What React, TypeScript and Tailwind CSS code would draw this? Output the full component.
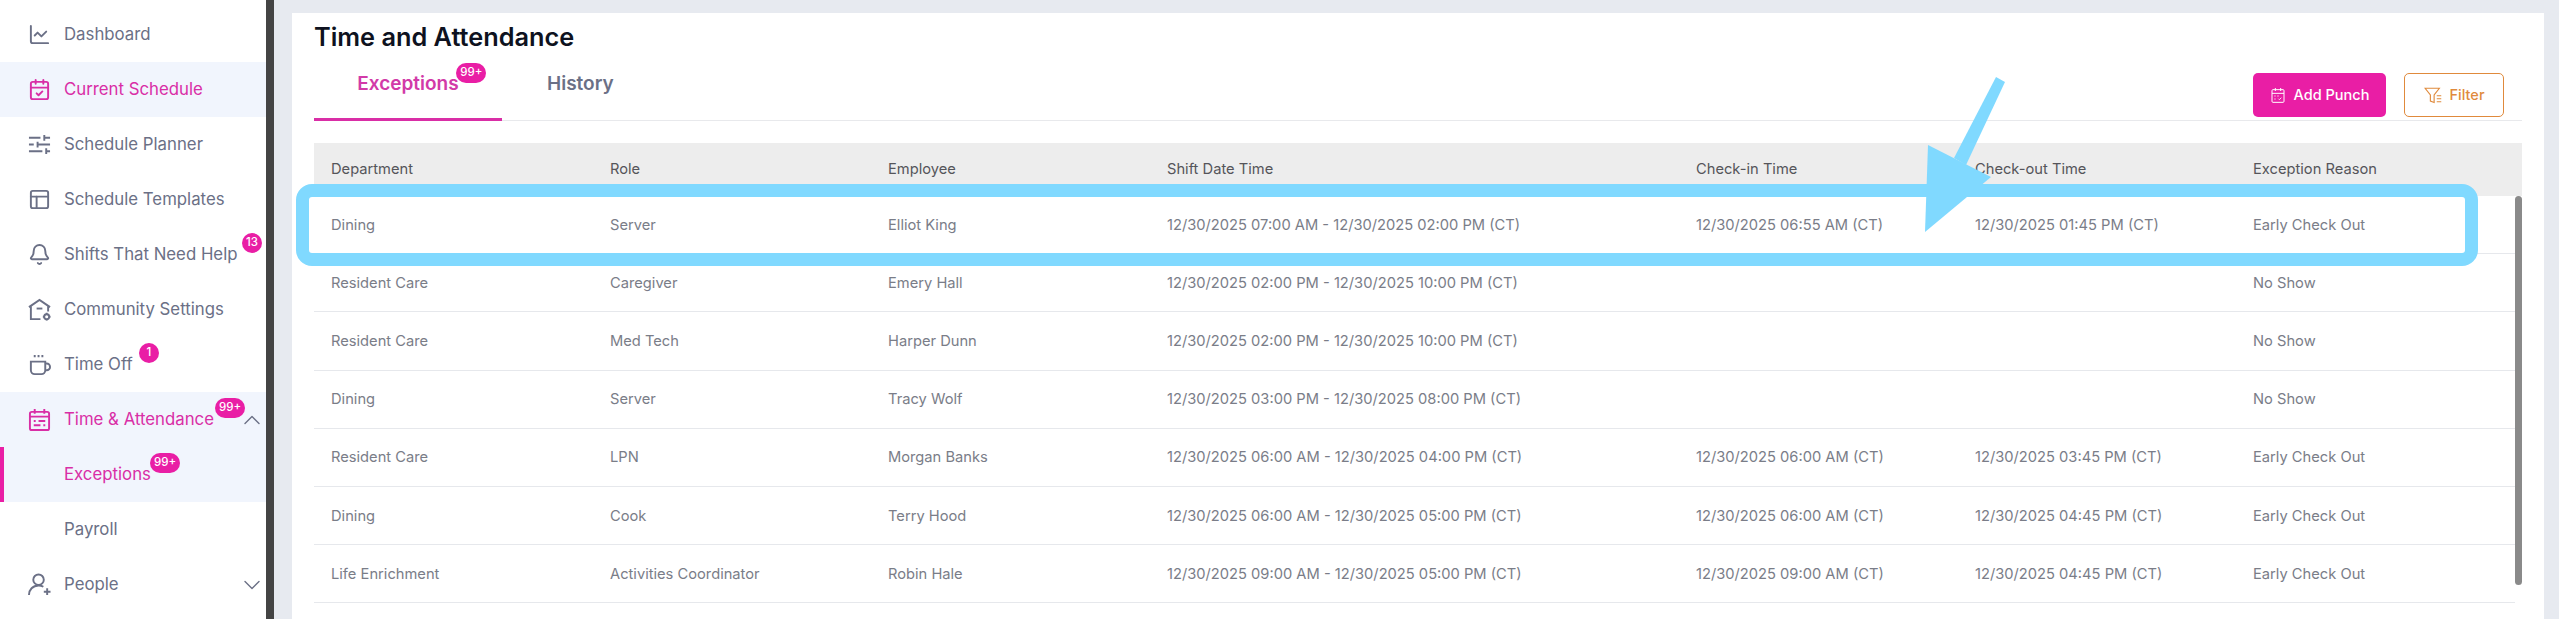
import type { ReactNode } from "react";
import { Bell, CalendarCheck, ChartLine, ChevronDown, ChevronUp, PanelsTopLeft } from "lucide-react";

const FONT = "font-['Inter','Noto_Sans',sans-serif]";

type Row = {
  department: string;
  role: string;
  employee: string;
  shift: string;
  checkIn: string;
  checkOut: string;
  reason: string;
};

const rows: Row[] = [
  { department: "Dining", role: "Server", employee: "Elliot King", shift: "12/30/2025 07:00 AM - 12/30/2025 02:00 PM (CT)", checkIn: "12/30/2025 06:55 AM (CT)", checkOut: "12/30/2025 01:45 PM (CT)", reason: "Early Check Out" },
  { department: "Resident Care", role: "Caregiver", employee: "Emery Hall", shift: "12/30/2025 02:00 PM - 12/30/2025 10:00 PM (CT)", checkIn: "", checkOut: "", reason: "No Show" },
  { department: "Resident Care", role: "Med Tech", employee: "Harper Dunn", shift: "12/30/2025 02:00 PM - 12/30/2025 10:00 PM (CT)", checkIn: "", checkOut: "", reason: "No Show" },
  { department: "Dining", role: "Server", employee: "Tracy Wolf", shift: "12/30/2025 03:00 PM - 12/30/2025 08:00 PM (CT)", checkIn: "", checkOut: "", reason: "No Show" },
  { department: "Resident Care", role: "LPN", employee: "Morgan Banks", shift: "12/30/2025 06:00 AM - 12/30/2025 04:00 PM (CT)", checkIn: "12/30/2025 06:00 AM (CT)", checkOut: "12/30/2025 03:45 PM (CT)", reason: "Early Check Out" },
  { department: "Dining", role: "Cook", employee: "Terry Hood", shift: "12/30/2025 06:00 AM - 12/30/2025 05:00 PM (CT)", checkIn: "12/30/2025 06:00 AM (CT)", checkOut: "12/30/2025 04:45 PM (CT)", reason: "Early Check Out" },
  { department: "Life Enrichment", role: "Activities Coordinator", employee: "Robin Hale", shift: "12/30/2025 09:00 AM - 12/30/2025 05:00 PM (CT)", checkIn: "12/30/2025 09:00 AM (CT)", checkOut: "12/30/2025 04:45 PM (CT)", reason: "Early Check Out" },
];

const COLUMNS = "grid grid-cols-[279px_278px_279px_529px_279px_278px_1fr]";

function Badge({ children, className }: { children: ReactNode; className: string }) {
  return (
    <span
      className={`absolute flex h-5 items-center justify-center rounded-full bg-[#e91ea5] text-[11.5px] font-medium text-white ${className}`}
    >
      {children}
    </span>
  );
}

function Icon({ children, className }: { children: ReactNode; className?: string }) {
  return (
    <svg viewBox="0 0 24 24" fill="none" stroke="currentColor" strokeWidth="2" className={className} aria-hidden>
      {children}
    </svg>
  );
}

function CalendarLines({ className }: { className?: string }) {
  return (
    <Icon className={className}>
      <rect x="2" y="4" width="20" height="19" rx="2" />
      <path d="M7 1v5M17 1v5M2 9h20M6 13.5h2M11 13.5h7M6 18h7M16 18h2" />
    </Icon>
  );
}

function PlannerIcon({ className }: { className?: string }) {
  return (
    <Icon className={className}>
      <path d="M1 5h12M17 2v6M17 5h6M1 12h5M10 9v6M10 12h13M1 19h14M19 16v6M19 19h4" />
    </Icon>
  );
}

function CommunityIcon({ className }: { className?: string }) {
  return (
    <Icon className={className}>
      <path d="M1 9.5 12 2l11 7.5" />
      <path d="M3 8.5V22h10M21 8.5V14" />
      <path d="M9 11h6" />
      <circle cx="19.5" cy="19.5" r="2.6" />
      <path d="M19.5 15.5v1.4M19.5 22.1v1.4M15.5 19.5h1.4M22.1 19.5h1.4" />
    </Icon>
  );
}

function CupIcon({ className }: { className?: string }) {
  return (
    <Icon className={className}>
      <path d="M3 9h15v9a4 4 0 0 1-4 4H7a4 4 0 0 1-4-4z" />
      <path d="M18 11h1.5a3.5 3.5 0 0 1 0 7H18" />
      <path d="M7 2v2.5M11 2v2.5M15 2v2.5" />
    </Icon>
  );
}

function PersonPlusIcon({ className }: { className?: string }) {
  return (
    <Icon className={className}>
      <circle cx="11" cy="7" r="5.5" />
      <path d="M1 23c0-5.5 4-10 10-10 2 0 3.5.4 5 1.3" />
      <path d="M20 16v7M16.5 19.5h7" />
    </Icon>
  );
}

function PunchIcon({ className }: { className?: string }) {
  return (
    <Icon className={className}>
      <rect x="3" y="4" width="18" height="19" rx="1.5" strokeWidth="1.5" />
      <path d="M8 1.5V6M16 1.5V6M3 9.5h18" strokeWidth="1.5" />
      <path d="M6.5 13.5h2M11 13.5h2M6.500 18h2M12.5 17.500l1.500 1.500 3-3" strokeWidth="1.3" />
    </Icon>
  );
}

function FilterIcon({ className }: { className?: string }) {
  return (
    <Icon className={className}>
      <path d="M1.5 3h19l-7 9v10l-5-2v-8z" strokeWidth="1.5" />
      <path d="M17 13h6M17 17h6M17 21h6" strokeWidth="1.5" />
    </Icon>
  );
}

function NavItem({
  icon,
  label,
  active,
  children,
  bar,
}: {
  icon?: ReactNode;
  label: string;
  active?: boolean;
  children?: ReactNode;
  bar?: boolean;
}) {
  return (
    <div
      className={`relative flex h-[55px] items-center pl-[28px] text-[16.8px] ${
        active ? "bg-[#f1f5fd] text-[#d92ea6]" : "text-[#6b7086]"
      }`}
    >
      {bar ? <span className="absolute inset-y-0 left-0 w-1 bg-[#e91ea5]" /> : null}
      <span className="flex w-[36px] shrink-0 items-center">{icon}</span>
      <span className="relative whitespace-nowrap">{label}</span>
      {children}
    </div>
  );
}

function Sidebar() {
  const icon = "size-[23px]";
  const chevron = "absolute right-0 top-[13.5px] size-[28px] stroke-[1.2] text-[#6b7086]";
  return (
    <aside className="w-[266px] shrink-0 bg-white pt-[7px]">
      <NavItem icon={<ChartLine className={icon} />} label="Dashboard" />
      <NavItem icon={<CalendarCheck className={icon} />} label="Current Schedule" active />
      <NavItem icon={<PlannerIcon className={icon} />} label="Schedule Planner" />
      <NavItem icon={<PanelsTopLeft className={icon} />} label="Schedule Templates" />
      <NavItem icon={<Bell className={icon} />} label="Shifts That Need Help">
        <Badge className="left-[242px] top-[6px] w-5">13</Badge>
      </NavItem>
      <NavItem icon={<CommunityIcon className={icon} />} label="Community Settings" />
      <NavItem icon={<CupIcon className={icon} />} label="Time Off">
        <Badge className="left-[139px] top-[6px] w-5">1</Badge>
      </NavItem>
      <NavItem icon={<CalendarLines className={icon} />} label="Time & Attendance" active>
        <Badge className="left-[215px] top-[6px] w-[30px]">99+</Badge>
        <ChevronUp className={chevron} />
      </NavItem>
      <NavItem label="Exceptions" active bar>
        <Badge className="left-[150px] top-[6px] w-[30px]">99+</Badge>
      </NavItem>
      <NavItem label="Payroll" />
      <NavItem icon={<PersonPlusIcon className={icon} />} label="People">
        <ChevronDown className={chevron} />
      </NavItem>
    </aside>
  );
}

function Arrow() {
  return (
    <svg viewBox="0 0 2559 619" className="pointer-events-none absolute inset-0 h-[619px] w-[2559px]" aria-hidden>
      <polygon points="1996,77 2005,82 1966,165 1954,158" fill="#80d9ff" />
      <polygon points="1928,145 1991,177 1925,232" fill="#80d9ff" />
    </svg>
  );
}

function Table() {
  return (
    <div className="relative mt-[22px] mr-[22px]">
      <div className={`${COLUMNS} h-[53px] items-center bg-[#ededed] pl-[17px] text-[14.7px] text-[#55555a]`}>
        <span>Department</span>
        <span>Role</span>
        <span>Employee</span>
        <span>Shift Date Time</span>
        <span>Check-in Time</span>
        <span>Check-out Time</span>
        <span>Exception Reason</span>
      </div>
      <div className="mr-[7px]">
        {rows.map((row) => (
          <div
            key={row.employee}
            className={`${COLUMNS} h-[58.2px] items-center border-b border-[#e6e8ec] pl-[17px] text-[14.7px] text-[#7a7d88]`}
          >
            <span>{row.department}</span>
            <span>{row.role}</span>
            <span>{row.employee}</span>
            <span>{row.shift}</span>
            <span>{row.checkIn}</span>
            <span>{row.checkOut}</span>
            <span>{row.reason}</span>
          </div>
        ))}
      </div>
      <div className="absolute right-0 top-[53px] h-[389px] w-[7px] rounded-sm bg-[#8a8a8a]" />
    </div>
  );
}

export default function App() {
  return (
    <div className={`relative flex h-[619px] w-[2559px] overflow-hidden bg-[#e7eaf0] ${FONT}`}>
      <Sidebar />
      <div className="w-2 shrink-0 bg-[#444444]" />
      <main className="ml-[18px] mt-[13px] w-[2252px] bg-white pl-[22px]">
        <h1 className="pt-[8px] text-[25.3px] leading-8 font-semibold text-[#0e1220]">Time and Attendance</h1>
        <div className="mr-[22px] mt-[9px] flex h-[59px] items-start border-b border-[#e8e9ec]">
          <div className="flex h-[59px] w-[188px] justify-center border-b-[3px] border-[#d92ea6] pt-[8px] text-[19px] font-semibold text-[#d23aa8]">
            <span className="relative">
              Exceptions
              <Badge className="left-[99px] top-[-7px] w-[30px]">99+</Badge>
            </span>
          </div>
          <span className="ml-[45px] pt-[8px] text-[19px] font-semibold text-[#6b7086]">History</span>
          <div className="ml-auto mr-[18px] mt-[11px] flex gap-[18px]">
            <button type="button" className="flex h-[44px] w-[133px] items-center justify-center gap-2 rounded-[5px] bg-[#e91ea5] text-[14.5px] font-medium text-white">
              <PunchIcon className="size-[16px]" />
              Add Punch
            </button>
            <button type="button" className="flex h-[44px] w-[100px] items-center justify-center gap-2 rounded-[5px] border border-[#e08a3c] text-[14.5px] font-medium text-[#e08a3c]">
              <FilterIcon className="size-[18px]" />
              Filter
            </button>
          </div>
        </div>
        <Table />
      </main>
      <div className="absolute left-[296px] top-[184px] h-[82px] w-[2182px] rounded-[16px] border-[13px] border-[#80d9ff]" />
      <Arrow />
    </div>
  );
}
